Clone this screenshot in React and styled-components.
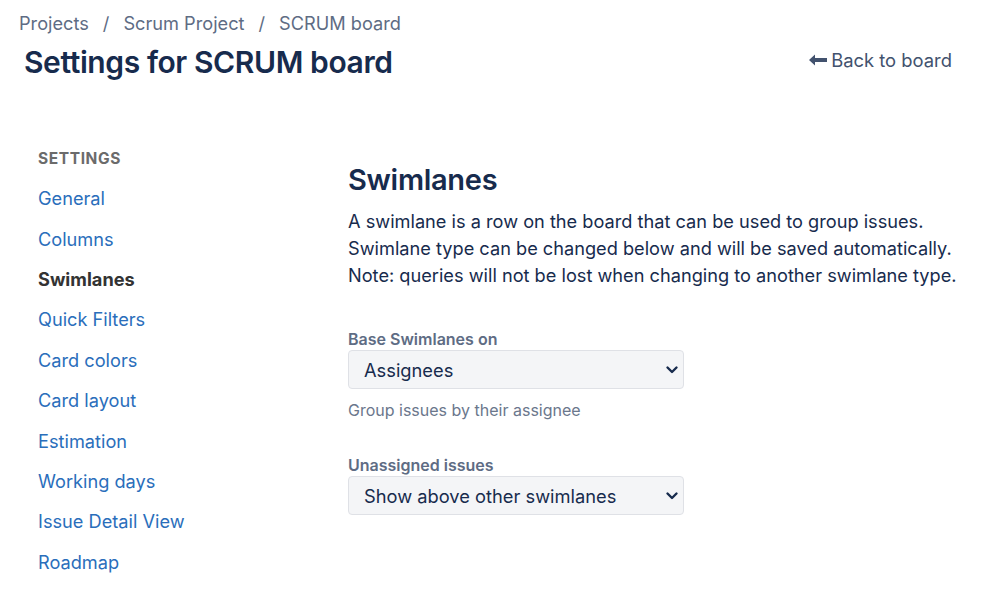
import React from 'react';
import styled, { createGlobalStyle } from 'styled-components';

const GlobalStyle = createGlobalStyle`
  body {
    margin: 0;
    background: #ffffff;
    font-family: Inter, 'Noto Sans', sans-serif;
  }
`;

const Page = styled.div`
  width: 998px;
  height: 605px;
  overflow: hidden;
`;

const Header = styled.header`
  padding: 10px 46px 0 19px;
`;

const Breadcrumbs = styled.nav`
  display: flex;
  align-items: center;
  gap: 14px;
  font-size: 18.2px;
  line-height: 26px;
  color: #5e6c84;
`;

const Crumb = styled.a`
  color: inherit;
  text-decoration: none;
`;

const Slash = styled.span`
  color: #5e6c84;
`;

const TitleRow = styled.div`
  display: flex;
  align-items: center;
  justify-content: space-between;
  padding-left: 5px;
  margin-top: 6px;
`;

const Title = styled.h1`
  margin: 0;
  font-size: 30px;
  font-weight: 600;
  letter-spacing: -0.4px;
  color: #172b4d;
  line-height: 40px;
`;

const BackLink = styled.a`
  display: flex;
  align-items: center;
  gap: 4px;
  font-size: 18.4px;
  color: #42526e;
  text-decoration: none;
  margin-top: -4px;
`;

const Body = styled.div`
  display: flex;
  padding: 66px 0 0 38px;
`;

const Sidebar = styled.aside`
  width: 310px;
  flex: none;
`;

const SidebarHeading = styled.h3`
  margin: 0 0 8px;
  font-size: 15.5px;
  font-weight: 700;
  letter-spacing: 0.6px;
  color: #6b6b6b;
  line-height: 22px;
`;

const NavList = styled.ul`
  list-style: none;
  margin: 0;
  padding: 0;
`;

const NavItem = styled.li`
  height: 40.4px;
  display: flex;
  align-items: center;
  font-size: 18.2px;
  color: ${(p) => (p.$active ? '#333333' : '#2a6ebb')};
  font-weight: ${(p) => (p.$active ? 700 : 400)};
`;

const Content = styled.main`
  flex: 1;
  padding-top: 12px;
`;

const SectionTitle = styled.h2`
  margin: 0 0 8px;
  font-size: 29px;
  font-weight: 600;
  letter-spacing: -0.3px;
  color: #172b4d;
  line-height: 40px;
`;

const Description = styled.p`
  margin: 0;
  font-size: 18.2px;
  line-height: 27px;
  color: #172b4d;
`;

const Field = styled.div`
  margin-top: ${(p) => p.$gap}px;
  width: 336px;
`;

const Label = styled.label`
  display: block;
  font-size: 16px;
  font-weight: 600;
  color: #5e6c84;
  line-height: 20px;
  margin-bottom: 1px;
`;

const SelectBox = styled.div`
  height: 39px;
  box-sizing: border-box;
  border: 1px solid #dfe1e6;
  border-radius: 4px;
  background: #f4f5f7;
  display: flex;
  align-items: center;
  justify-content: space-between;
  padding: 0 4px 0 15px;
  font-size: 18.3px;
  color: #172b4d;
`;

const Help = styled.div`
  margin-top: 11px;
  font-size: 16px;
  color: #6b778c;
  line-height: 20px;
`;

const Chevron = () => (
  <svg width="14" height="14" viewBox="0 0 14 14">
    <path d="M2.5 4.5 L7 9 L11.5 4.5" fill="none" stroke="#172b4d" strokeWidth="2.4" strokeLinecap="round" strokeLinejoin="round" />
  </svg>
);

const LongArrow = () => (
  <svg width="18" height="12" viewBox="0 0 18 12">
    <path d="M0 6 L6 0.5 L6 4 L18 4 L18 8 L6 8 L6 11.5 Z" fill="#42526e" />
  </svg>
);

const navItems = [
  'General',
  'Columns',
  'Swimlanes',
  'Quick Filters',
  'Card colors',
  'Card layout',
  'Estimation',
  'Working days',
  'Issue Detail View',
  'Roadmap',
];

export default function App() {
  return (
    <Page>
      <GlobalStyle />
      <Header>
        <Breadcrumbs>
          <Crumb href="#">Projects</Crumb>
          <Slash>/</Slash>
          <Crumb href="#">Scrum Project</Crumb>
          <Slash>/</Slash>
          <Crumb href="#">SCRUM board</Crumb>
        </Breadcrumbs>
        <TitleRow>
          <Title>Settings for SCRUM board</Title>
          <BackLink href="#">
            <LongArrow />
            Back to board
          </BackLink>
        </TitleRow>
      </Header>
      <Body>
        <Sidebar>
          <SidebarHeading>SETTINGS</SidebarHeading>
          <NavList>
            {navItems.map((item) => (
              <NavItem key={item} $active={item === 'Swimlanes'}>
                {item}
              </NavItem>
            ))}
          </NavList>
        </Sidebar>
        <Content>
          <SectionTitle>Swimlanes</SectionTitle>
          <Description>
            A swimlane is a row on the board that can be used to group issues.
            <br />
            Swimlane type can be changed below and will be saved automatically.
            <br />
            Note: queries will not be lost when changing to another swimlane type.
          </Description>
          <Field $gap={40}>
            <Label>Base Swimlanes on</Label>
            <SelectBox>
              Assignees
              <Chevron />
            </SelectBox>
            <Help>Group issues by their assignee</Help>
          </Field>
          <Field $gap={35}>
            <Label>Unassigned issues</Label>
            <SelectBox>
              Show above other swimlanes
              <Chevron />
            </SelectBox>
          </Field>
        </Content>
      </Body>
    </Page>
  );
}
